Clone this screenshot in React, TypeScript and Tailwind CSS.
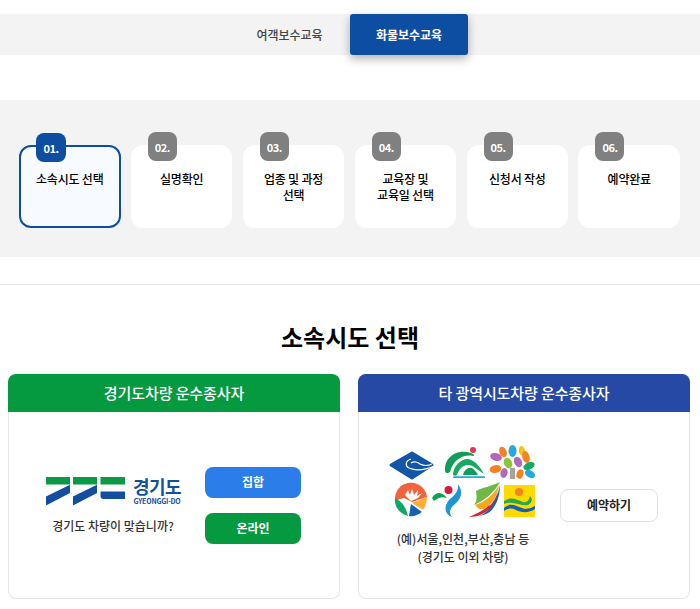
import React from "react";

const font = { fontFamily: '"Noto Sans CJK KR", "Noto Sans", sans-serif' };

const steps = [
  { no: "01.", label: ["소속시도 선택"], active: true },
  { no: "02.", label: ["실명확인"] },
  { no: "03.", label: ["업종 및 과정", "선택"] },
  { no: "04.", label: ["교육장 및", "교육일 선택"] },
  { no: "05.", label: ["신청서 작성"] },
  { no: "06.", label: ["예약완료"] },
];

const petals = [
  { x: 503, y: 451, rx: 3.6, ry: 5.5, r: -20, c: "#f58220" },
  { x: 512.5, y: 450, rx: 4, ry: 6, r: 0, c: "#25a9e0" },
  { x: 522, y: 450, rx: 3.2, ry: 5, r: -10, c: "#f4c21f" },
  { x: 526, y: 456, rx: 3.6, ry: 6, r: -15, c: "#f58220" },
  { x: 496, y: 456, rx: 6, ry: 3.8, r: 15, c: "#b568b8" },
  { x: 508, y: 462, rx: 4, ry: 5.5, r: -25, c: "#8bc53f" },
  { x: 518, y: 461, rx: 3.8, ry: 5.5, r: -25, c: "#b568b8" },
  { x: 529, y: 465, rx: 6, ry: 3.6, r: -25, c: "#18a862" },
  { x: 495.5, y: 468, rx: 6, ry: 3.8, r: -10, c: "#f58220" },
  { x: 504, y: 472, rx: 3.5, ry: 5, r: 15, c: "#b568b8" },
  { x: 520, y: 473, rx: 3.3, ry: 4.8, r: 20, c: "#f58220" },
  { x: 530, y: 473, rx: 5.5, ry: 3.6, r: 30, c: "#25a9e0" },
];

function GyeonggiLogo() {
  return (
    <div className="flex items-center gap-[7px]">
      <svg width="81" height="30" viewBox="45 475 81 30">
        <rect x="46" y="476" width="24" height="7.5" fill="#0b9a43" />
        <path d="M46 495.5 70 483.7V492L46 504.5Z" fill="#134f9e" />
        <rect x="73" y="476" width="24" height="7.5" fill="#0b9a43" />
        <path d="M73 495.5 97 483.7V492L73 504.5Z" fill="#134f9e" />
        <rect x="100.5" y="476" width="24.5" height="7.5" fill="#0b9a43" />
        <path d="M100.5 490.5H125V498H103.5Q100.5 498 100.5 495Z" fill="#134f9e" />
      </svg>
      <div className="flex w-[48px] flex-col items-center text-[#134f9e]">
        <span className="text-[18px] leading-[20px] font-bold tracking-[-0.6px]">경기도</span>
        <span className="mt-[1px] text-[7px] leading-[9px] font-bold tracking-[-0.2px]">GYEONGGI-DO</span>
      </div>
    </div>
  );
}

function CityLogos() {
  return (
    <svg width="150" height="74" viewBox="388 444 150 74">
      {/* diamond */}
      <path d="M391 464 412 452 432 464 412 477Z" fill="#1356a8" stroke="#1356a8" strokeWidth="3" strokeLinejoin="round" />
      <path d="M411 458C405 460 405 465 409 467 416 470 425 469 434 465" fill="none" stroke="#fff" strokeWidth="1.2" />
      <path d="M411 462C414 460 418 461 420 463 424 465 428 465 432 463" fill="none" stroke="#fff" strokeWidth="1.2" />
      {/* green mountain */}
      <circle cx="473" cy="449" r="3" fill="#e8344e" />
      <path d="M445 470C444 457 456 447 471 452 474 453 475 455 473 455 463 453 453 459 450 471 448 473 445 472 445 470Z" fill="#0f9d58" />
      <path d="M453 473C454 465 460 458 468 458 475 459 481 467 484 473 478 469 473 464 468 464 463 464 459 468 457 474 455 475 453 475 453 473Z" fill="#18a862" />
      <path d="M463 474C464 469 468 466 472 467 475 469 477 472 478 474Z" fill="#0f9d58" />
      <rect x="453" y="475.3" width="32" height="1.8" rx="0.9" fill="#25a9e0" />
      {/* tree */}
      {petals.map((p) => (
        <ellipse key={`${p.x}-${p.y}`} cx={p.x} cy={p.y} rx={p.rx} ry={p.ry} fill={p.c} transform={`rotate(${p.r} ${p.x} ${p.y})`} />
      ))}
      <rect x="510" y="467" width="5" height="11" fill="#a8a29a" />
      {/* sun circle */}
      <path d="M395 499.5A16 16 0 0 1 427 496L412 501 404 497Z" fill="#f2643d" />
      <path d="M405 494 408 489 410 494 412 488 414 494 418 489 417 495 422 492 418 497 411 500Z" fill="#fff" />
      <path d="M395 497C400 499 406 505 408 515 400 513 394 506 395 497Z" fill="#0fa868" />
      <path d="M412 502 427 496C427 502 425 506 423 509Z" fill="#fbb034" />
      <path d="M409 515 411 503 422 511C418 514 413 516 409 515Z" fill="#1560b0" />
      {/* swoosh with dot */}
      <circle cx="448.5" cy="489" r="4" fill="#d7193f" />
      <path d="M432 497C436 490 442 491 447 497 442 495 438 497 434 500Z" fill="#12a150" />
      <path d="M458 483C463 490 462 497 455 503 449 508 449 512 452 516 444 513 444 505 449 499 455 494 459 490 458 483Z" fill="#1c97d5" />
      {/* leaf */}
      <path d="M500 481C495 484 484 486 476 490 477 497 477 500 474 504 484 500 494 492 500 481Z" fill="#71b947" />
      <path d="M475 504C484 501 493 495 499 484 498 494 491 505 484 508L479 508Z" fill="#f4a81d" />
      <path d="M469 516C476 513 486 508 488 505 492 504 495 498 498 491 497 499 492 508 484 512 479 515 474 516 469 516Z" fill="#d9262e" />
      <path d="M480 515C489 510 496 503 500 484 500 498 494 510 486 513Z" fill="#1660ad" />
      {/* yellow square */}
      <rect x="504" y="484" width="31" height="32" fill="#ffd900" />
      <circle cx="519" cy="491" r="4" fill="#f58220" />
      <path d="M504 500C511 495 517 499 523 501 527 502 529 499 530 495 533 498 532 502 528 504 522 506 513 499 504 503Z" fill="#2aa84a" />
      <path d="M504 507C510 501 516 505 522 507 527 509 531 507 535 505V508C529 512 522 512 516 509 512 507 508 507 504 510Z" fill="#1560b0" />
    </svg>
  );
}

export default function App() {
  return (
    <div style={font} className="min-h-[609px] w-[700px] overflow-hidden bg-white pt-[14px] pb-[10px]">
      {/* tabs */}
      <div className="flex h-[41px] justify-center bg-[#f3f3f3]">
        <div className="flex w-[118px] items-center justify-center pr-[3px] text-[12px] font-medium text-[#444]">여객보수교육</div>
        <div className="flex w-[118px] items-center justify-center rounded-[3px] bg-[#0d4ea3] text-[12px] font-bold text-white shadow-[0_4px_10px_rgba(0,0,0,0.3)]">화물보수교육</div>
      </div>

      {/* steps */}
      <div className="mt-[45px] h-[157px] bg-[#f3f3f3] pt-[45px] pl-[19px] pr-[20px]">
        <div className="grid grid-cols-6 gap-[10.4px]">
          {steps.map((s) => (
            <div
              key={s.no}
              className={`relative h-[83px] rounded-[12px] text-center text-[12px] leading-[16px] font-medium tracking-[-0.2px] text-black ${s.active ? "border-2 border-[#0d4ea3] bg-[#f7faff] pt-[24px]" : "bg-white pt-[26px]"}`}
            >
              <span
                className={`absolute flex h-[29px] items-center justify-center rounded-[8px] text-[11px] font-bold tracking-[-0.5px] text-white ${s.active ? "top-[-14px] left-[15px] w-[30px] bg-[#0d4ea3]" : "top-[-13px] left-[17px] w-[29px] bg-[#808080]"}`}
              >
                {s.no}
              </span>
              {s.label.map((l) => (
                <div key={l}>{l}</div>
              ))}
            </div>
          ))}
        </div>
      </div>

      <div className="mt-[27px] border-t border-[#e6e6e6]" />

      <h2 className="mt-[34px] text-center text-[24px] leading-[36px] font-bold text-black">소속시도 선택</h2>

      {/* region cards */}
      <div className="mt-[19px] grid grid-cols-2 gap-[18px] pl-[8px] pr-[10px]">
        <div className="flex h-[225px] flex-col">
          <div className="flex h-[38px] items-center justify-center rounded-t-[8px] bg-[#059a3f] text-[15px] font-medium tracking-[-0.1px] text-white">경기도차량 운수종사자</div>
          <div className="flex flex-1 items-center gap-[24px] rounded-b-[8px] border border-t-0 border-[#e6e6e6] pl-[36px]">
            <div className="flex flex-col items-center gap-[11px]">
              <GyeonggiLogo />
              <p className="text-[12px] leading-[18px] font-medium text-[#333]">경기도 차량이 맞습니까?</p>
            </div>
            <div className="flex w-[96px] flex-col gap-[15px]">
              <button className="h-[31px] rounded-[8px] bg-[#2b7de9] text-[12px] font-bold text-white">집합</button>
              <button className="h-[31px] rounded-[8px] bg-[#059a3f] text-[12px] font-bold text-white">온라인</button>
            </div>
          </div>
        </div>

        <div className="flex h-[225px] flex-col">
          <div className="flex h-[38px] items-center justify-center rounded-t-[8px] bg-[#2549a5] text-[15px] font-medium tracking-[-0.1px] text-white">타 광역시도차량 운수종사자</div>
          <div className="flex flex-1 items-center gap-[22px] rounded-b-[8px] border border-t-0 border-[#e6e6e6] pl-[29px]">
            <div className="flex flex-col items-center gap-[11px]">
              <CityLogos />
              <p className="text-center text-[12px] leading-[18px] font-medium text-[#333]">
                (예)서울,인천,부산,충남 등
                <br />
                (경기도 이외 차량)
              </p>
            </div>
            <button className="h-[33px] w-[98px] rounded-[8px] border border-[#e0e0e0] bg-white text-[12px] font-bold text-[#222]">예약하기</button>
          </div>
        </div>
      </div>
    </div>
  );
}
